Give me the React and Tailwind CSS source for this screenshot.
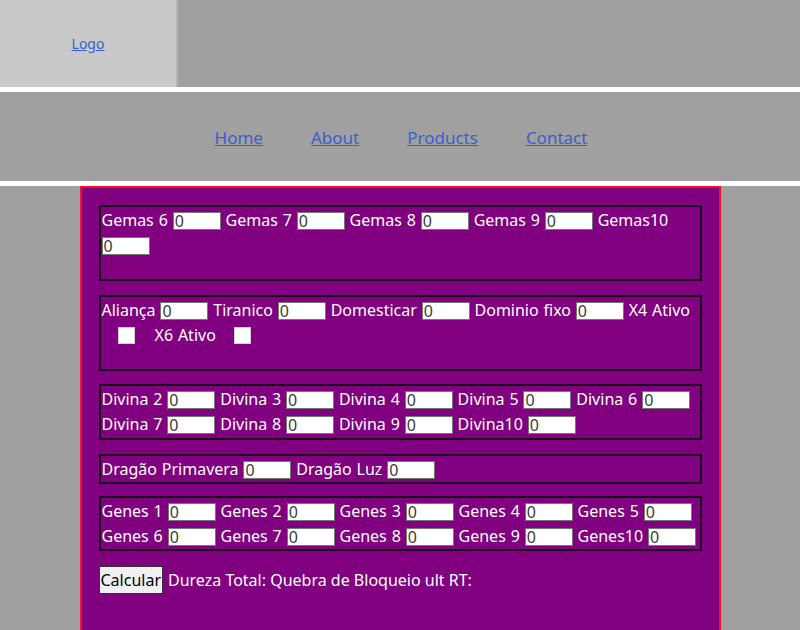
import React from 'react';

const Num = () => (
  <input
    type="text"
    defaultValue="0"
    className="inline-block align-top mt-[4px] w-[48px] h-[18px] bg-white border border-[#767676] px-[1px] text-[16px] leading-none text-[#3a3a3a]"
  />
);

const Field = ({ label, last }) => (
  <>
    {label} <Num />
    {last ? null : ' '}
  </>
);

const Box = ({ children, extra, className = '' }) => (
  <div className={`border-2 border-[#1b001b] px-[1px] pt-[1px] leading-[25px] text-white [word-spacing:0.7px] ${className}`}>
    {children}
    {extra && <div className="h-[21px]" />}
  </div>
);

const App = () => {
  const gemas = ['Gemas 6', 'Gemas 7', 'Gemas 8', 'Gemas 9', 'Gemas10'];
  const divinas = ['Divina 2', 'Divina 3', 'Divina 4', 'Divina 5', 'Divina 6', 'Divina 7', 'Divina 8', 'Divina 9', 'Divina10'];
  const genes = ['Genes 1', 'Genes 2', 'Genes 3', 'Genes 4', 'Genes 5', 'Genes 6', 'Genes 7', 'Genes 8', 'Genes 9', 'Genes10'];

  return (
    <div className="min-h-[630px] bg-[#a0a0a0] font-['Noto_Sans',sans-serif] text-[16px]">
      <header className="flex h-[87px]">
        <div className="w-[178px] bg-[#c9c9c9] border-r-2 border-[#b2b2b2] flex items-center justify-center">
          <a href="#" className="text-[14px] text-[#3b5fcf] underline">Logo</a>
        </div>
        <div className="flex-1 bg-[#a0a0a0]" />
      </header>
      <div className="h-[5px] bg-white" />
      <nav className="h-[89px] flex items-center justify-center gap-[48px] pt-[3px] pl-[2px]">
        <a href="#" className="text-[17px] text-[#3b5fcf] underline">Home</a>
        <a href="#" className="text-[17px] text-[#3b5fcf] underline">About</a>
        <a href="#" className="text-[17px] text-[#3b5fcf] underline">Products</a>
        <a href="#" className="text-[17px] text-[#3b5fcf] underline">Contact</a>
      </nav>
      <div className="h-[5px] bg-white" />
      <main className="w-[641px] mx-auto bg-[#800080] border-2 border-b-0 border-[#f01020] px-[17px] pt-[17px] pb-[40px] flex flex-col gap-[14px]">
        <Box extra>
          {gemas.map((g, i) => (
            <Field key={g} label={g} last={i === gemas.length - 1} />
          ))}
        </Box>
        <Box extra>
          Aliança <Num /> Tiranico <Num /> Domesticar <Num /> Dominio fixo <Num /> X4 Ativo
          <input
            type="checkbox"
            className="appearance-none inline-block align-top mt-[4px] w-[17px] h-[17px] bg-white border border-[#cfcfcf] ml-[16px] mr-[20px]"
          />
          X6 Ativo{' '}
          <input
            type="checkbox"
            className="appearance-none inline-block align-top mt-[4px] w-[17px] h-[17px] bg-white border border-[#cfcfcf] ml-[13px]"
          />
        </Box>
        <Box className="-mt-[1px] pb-[1px]">
          {divinas.map((d, i) => (
            <Field key={d} label={d} last={i === divinas.length - 1} />
          ))}
        </Box>
        <Box>
          Dragão Primavera <Num /> Dragão Luz <Num />
        </Box>
        <Box className="-mt-[2px]">
          {genes.map((g, i) => (
            <Field key={g} label={g} last={i === genes.length - 1} />
          ))}
        </Box>
        <div className="flex items-center gap-[5px] text-white mt-[1px]">
          <button className="h-[28px] px-[1px] bg-[#f0f0f0] border border-[#333] text-black">Calcular</button>
          <span>Dureza Total: Quebra de Bloqueio ult RT:</span>
        </div>
      </main>
    </div>
  );
};

export default App;
